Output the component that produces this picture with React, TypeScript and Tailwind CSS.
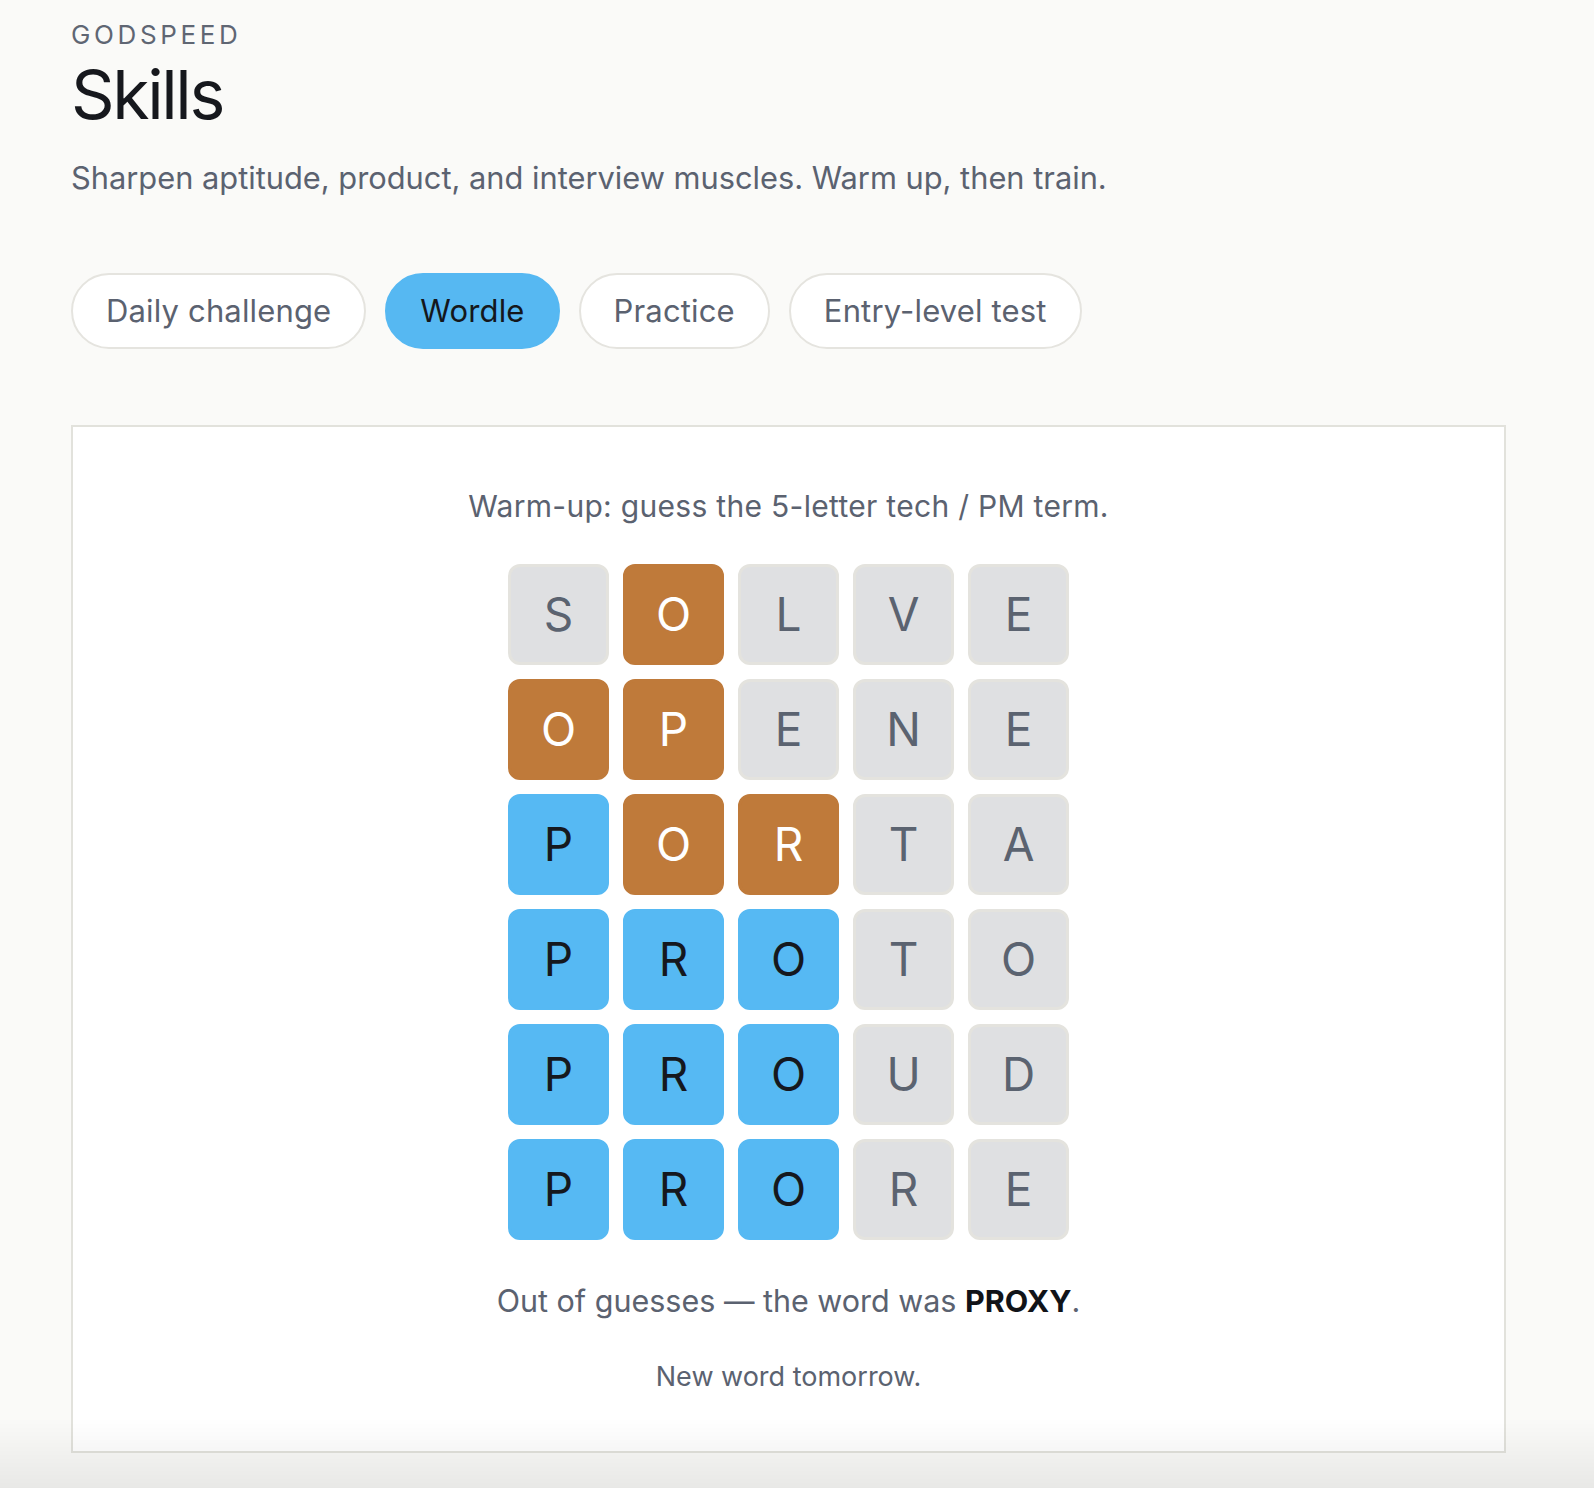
import React from 'react';

type Tone = 'absent' | 'present' | 'correct';

const rows: { letters: string; tones: Tone[] }[] = [
  { letters: 'SOLVE', tones: ['absent', 'present', 'absent', 'absent', 'absent'] },
  { letters: 'OPENE', tones: ['present', 'present', 'absent', 'absent', 'absent'] },
  { letters: 'PORTA', tones: ['correct', 'present', 'present', 'absent', 'absent'] },
  { letters: 'PROTO', tones: ['correct', 'correct', 'correct', 'absent', 'absent'] },
  { letters: 'PROUD', tones: ['correct', 'correct', 'correct', 'absent', 'absent'] },
  { letters: 'PRORE', tones: ['correct', 'correct', 'correct', 'absent', 'absent'] },
];

const toneClass: Record<Tone, string> = {
  absent: 'bg-[#dfe0e2] border-[#e4e3de] text-[#5b6370]',
  present: 'bg-[#bf7a3a] border-[#bf7a3a] text-white',
  correct: 'bg-[#56b9f3] border-[#56b9f3] text-[#15181e]',
};

const tabs = ['Daily challenge', 'Wordle', 'Practice', 'Entry-level test'];

export default function App() {
  const active = 'Wordle';

  return (
    <div
      className="min-h-screen bg-[#fafaf8] pl-[71px] pt-[22px] pb-[40px]"
      style={{ fontFamily: 'Inter, "Noto Sans", sans-serif' }}
    >
      <div className="text-[26px] leading-none tracking-[0.14em] text-[#5f6673]">GODSPEED</div>
      <h1 className="mt-[12px] text-[68px] leading-none tracking-[-0.035em] text-[#16181d]">Skills</h1>
      <p className="mt-[35px] text-[30.8px] leading-none text-[#5b6270]">
        Sharpen aptitude, product, and interview muscles. Warm up, then train.
      </p>

      {/* Tabs */}
      <div className="mt-[79px] flex items-center gap-[19px]">
        {tabs.map(tab => (
          <button
            key={tab}
            className={`h-[76px] rounded-full border-2 px-[33px] text-[31px] leading-none tracking-[0.005em] ${
              tab === active
                ? 'bg-[#56b8f2] border-[#56b8f2] text-[#14171c]'
                : 'bg-white border-[#e5e4df] text-[#5b6270]'
            }`}
          >
            {tab}
          </button>
        ))}
      </div>

      {/* Wordle card */}
      <div className="mt-[76px] w-[1435px] border-2 border-[#e2e2dc] bg-white pt-[64px] pb-[61px] flex flex-col items-center">
        <p className="text-[30px] leading-none tracking-[0.01em] text-[#5b6270]">
          Warm-up: guess the 5-letter tech / PM term.
        </p>

        <div className="mt-[43px] grid grid-cols-5 gap-[14px]">
          {rows.map((row, r) =>
            row.letters.split('').map((ch, c) => (
              <div
                key={`${r}-${c}`}
                className={`w-[101px] h-[101px] rounded-[12px] border-[3px] flex items-center justify-center text-[46px] leading-none ${toneClass[row.tones[c]]}`}
              >
                {ch}
              </div>
            ))
          )}
        </div>

        <p className="mt-[46px] text-[30.5px] leading-none text-[#5b6270]">
          Out of guesses — the word was <strong className="font-bold text-[#111318]">PROXY</strong>.
        </p>
        <p className="mt-[47px] text-[27px] leading-none text-[#5b6270]">New word tomorrow.</p>
      </div>

      {/* bottom fade */}
      <div className="pointer-events-none fixed inset-x-0 bottom-0 h-[70px] bg-gradient-to-b from-transparent to-black/[0.07]" />
    </div>
  );
}
